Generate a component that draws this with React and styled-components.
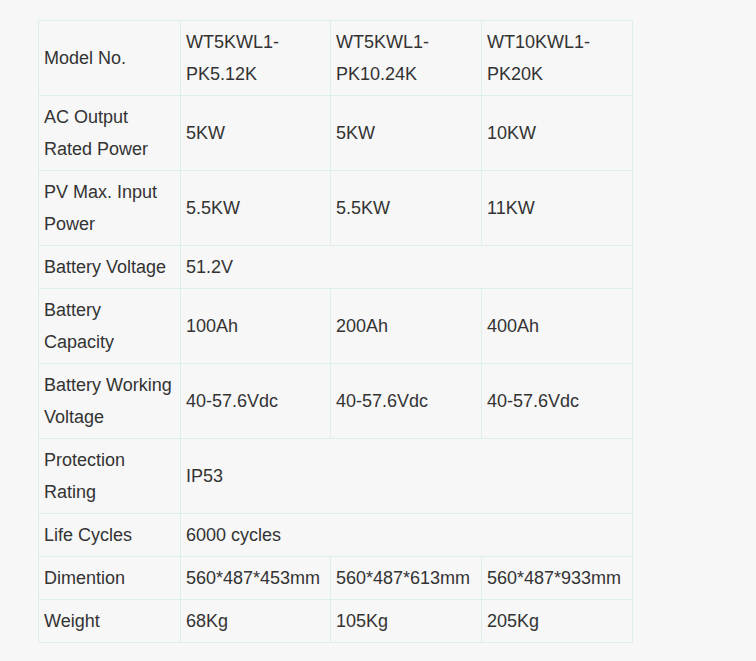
import styled, { createGlobalStyle } from "styled-components";

const GlobalStyle = createGlobalStyle`
  html, body {
    margin: 0;
    background: #f7f7f7;
  }
`;

const Page = styled.div`
  padding: 20px 0 20px 38px;
  font-family: "Liberation Sans", Arial, sans-serif;
  font-size: 18px;
  color: #333;
`;

const Table = styled.table`
  border-collapse: collapse;
  table-layout: fixed;
  width: 594px;
`;

const Col = styled.col`
  width: ${(p) => p.$w}px;
`;

const Cell = styled.td`
  border: 1px solid #dcefe9;
  padding: 5px;
  line-height: 32px;
  vertical-align: middle;
  text-align: left;
`;

const colWidths = [142, 150, 151, 151];

const specs = [
  ["Model No.", ["WT5KWL1-PK5.12K", "WT5KWL1-PK10.24K", "WT10KWL1-PK20K"]],
  ["AC Output Rated Power", ["5KW", "5KW", "10KW"]],
  ["PV Max. Input Power", ["5.5KW", "5.5KW", "11KW"]],
  ["Battery Voltage", ["51.2V"]],
  ["Battery Capacity", ["100Ah", "200Ah", "400Ah"]],
  ["Battery Working Voltage", ["40-57.6Vdc", "40-57.6Vdc", "40-57.6Vdc"]],
  ["Protection Rating", ["IP53"]],
  ["Life Cycles", ["6000 cycles"]],
  ["Dimention", ["560*487*453mm", "560*487*613mm", "560*487*933mm"]],
  ["Weight", ["68Kg", "105Kg", "205Kg"]],
];

export default function App() {
  return (
    <Page>
      <GlobalStyle />
      <Table>
        <colgroup>
          {colWidths.map((w, i) => (
            <Col key={i} $w={w} />
          ))}
        </colgroup>
        <tbody>
          {specs.map(([label, values]) => (
            <tr key={label}>
              <Cell>{label}</Cell>
              {values.length === 1 ? (
                <Cell colSpan={3}>{values[0]}</Cell>
              ) : (
                values.map((v, i) => <Cell key={i}>{v}</Cell>)
              )}
            </tr>
          ))}
        </tbody>
      </Table>
    </Page>
  );
}
